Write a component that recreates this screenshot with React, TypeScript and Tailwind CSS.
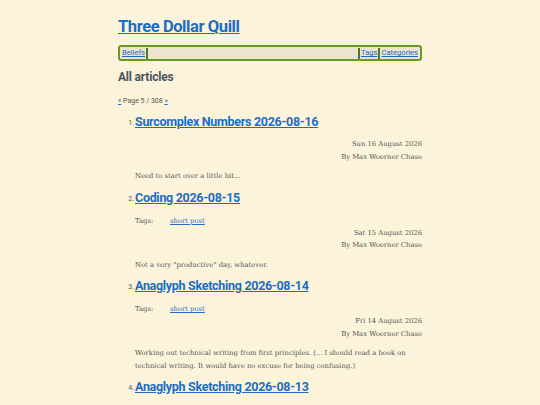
import React from "react";

const serif = { fontFamily: '"DejaVu Serif", "Liberation Serif", serif' };
const sans = { fontFamily: 'Roboto, "Open Sans", sans-serif' };

interface Article {
  title: string;
  date?: string;
  tags?: string[];
  summary?: string;
}

const articles: Article[] = [
  {
    title: "Surcomplex Numbers 2026-08-16",
    date: "Sun 16 August 2026",
    summary: "Need to start over a little bit...",
  },
  {
    title: "Coding 2026-08-15",
    date: "Sat 15 August 2026",
    tags: ["short post"],
    summary: 'Not a very "productive" day, whatever.',
  },
  {
    title: "Anaglyph Sketching 2026-08-14",
    date: "Fri 14 August 2026",
    tags: ["short post"],
    summary:
      "Working out technical writing from first principles. (... I should read a book on technical writing. It would have no excuse for being confusing.)",
  },
  {
    title: "Anaglyph Sketching 2026-08-13",
  },
];

const ArticleItem = ({ a, n }: { a: Article; n: number }) => (
  <li className="flex">
    <span className="w-[17px] shrink-0 pt-[7px] pr-[1px] text-right text-[7px] text-[#555]" style={sans}>
      {n}.
    </span>
    <div className="flex-1">
      <a
        href="#"
        className="block text-[12.5px] font-bold leading-[22px] tracking-[-0.3px] text-[#1b6ec2] underline"
        style={sans}
      >
        {a.title}
      </a>
      {a.tags ? (
        <div className="mt-[6px] flex text-[6.8px] leading-[12px] text-[#555]" style={serif}>
          <span className="w-[35px]">Tags:</span>
          {a.tags.map((t) => (
            <a key={t} href="#" className="text-[#1b6ec2] underline">
              {t}
            </a>
          ))}
        </div>
      ) : (
        a.date && <div className="h-[5px]" />
      )}
      {a.date && (
        <div className="text-right text-[6.8px] leading-[12.5px] text-[#555]" style={serif}>
          <div>{a.date}</div>
          <div>By Max Woerner Chase</div>
        </div>
      )}
      {a.summary && (
        <p className="mt-[7px] mb-[4px] text-[6.8px] leading-[12.5px] text-[#555]" style={serif}>
          {a.summary}
        </p>
      )}
    </div>
  </li>
);

export default function App() {
  return (
    <div className="h-[405px] w-full overflow-hidden bg-[#fcf3db]">
      <div className="mx-auto w-[304px] pt-[14px]">
        <h1>
          <a
            href="#"
            className="text-[16.5px] font-bold leading-[24px] tracking-[-0.4px] text-[#1b6ec2] underline"
            style={sans}
          >
            Three Dollar Quill
          </a>
        </h1>
        <nav
          className="mt-[6px] flex h-[16px] items-center rounded-[3px] border-2 border-[#6a9a22] bg-[#ebe4cf] px-[2px] text-[7.6px]"
          style={sans}
        >
          <a href="#" className="text-[#1b6ec2] underline">Beliefs</a>
          <span className="mx-[1px] h-[11px] w-[2px] bg-[#4f7a16]" />
          <span className="flex-1" />
          <span className="mx-[1px] h-[11px] w-[2px] bg-[#4f7a16]" />
          <a href="#" className="text-[#1b6ec2] underline">Tags</a>
          <span className="mx-[1px] h-[11px] w-[2px] bg-[#4f7a16]" />
          <a href="#" className="text-[#1b6ec2] underline">Categories</a>
        </nav>
        <h2 className="mt-[8px] text-[12px] font-bold leading-[16px] tracking-[-0.2px] text-[#4a5560]" style={sans}>
          All articles
        </h2>
        <div className="mt-[11px] text-[7px] leading-[10px] text-[#555]" style={sans}>
          <a href="#" className="text-[#1b6ec2] underline">«</a> Page 5 / 308{" "}
          <a href="#" className="text-[#1b6ec2] underline">»</a>
        </div>
        <ol className="mt-[5px]">
          {articles.map((a, i) => (
            <ArticleItem key={i} a={a} n={i + 1} />
          ))}
        </ol>
      </div>
    </div>
  );
}
